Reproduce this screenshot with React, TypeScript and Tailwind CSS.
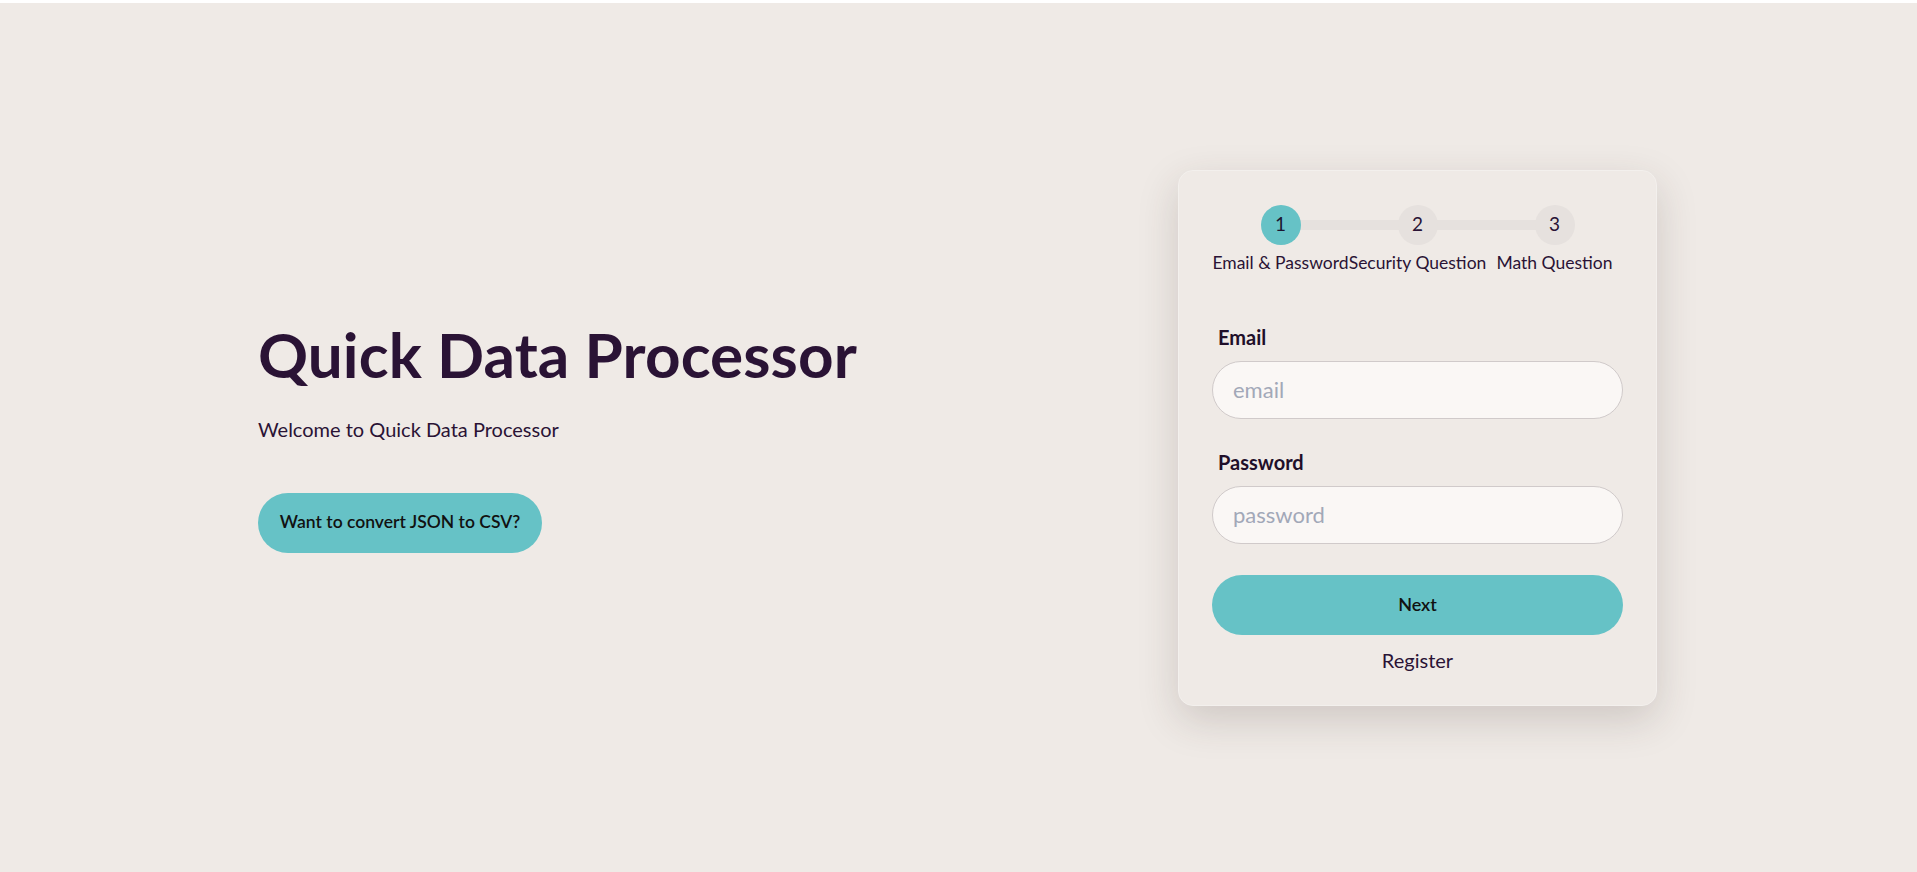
import React, { useState } from 'react';

const steps = ['Email & Password', 'Security Question', 'Math Question'];

export default function App() {
  const [email, setEmail] = useState('');
  const [password, setPassword] = useState('');
  const current = 0;

  return (
    <div className="min-h-screen bg-white font-['Lato',sans-serif] text-[#2a1335]">
      <div className="h-[3px] bg-white" />
      <main className="flex h-[869px] items-center justify-between bg-[#efeae6] pl-[258px] pr-[260px]">
        {/* Hero */}
        <section className="flex flex-col items-start">
          <h1 className="text-[62px] font-bold leading-[62px] tracking-[0.1px] text-[#2a1335]">
            Quick Data Processor
          </h1>
          <p className="mt-[30px] text-[20px] leading-[28px]">Welcome to Quick Data Processor</p>
          <button className="mt-[50px] flex h-[60px] w-[284px] items-center justify-center rounded-full bg-[#66c2c6] text-[17.5px] font-semibold text-[#111111]">
            Want to convert JSON to CSV?
          </button>
        </section>

        {/* Login card */}
        <div className="flex w-[479px] flex-col rounded-[15px] border border-[#f3f0ed] bg-[#efeae6] px-[33px] pb-[31px] pt-[34px] shadow-[0_14px_40px_rgba(60,45,40,0.18)]">
          {/* Stepper */}
          <div className="relative grid grid-cols-3">
            <div className="absolute left-[68px] right-[68px] top-[15px] h-[10px] bg-[#e6e1de]" />
            {steps.map((s, i) => (
              <div key={s} className="relative flex flex-col items-center">
                <div
                  className={`flex h-[40px] w-[40px] items-center justify-center rounded-full text-[19px] ${
                    i === current ? 'bg-[#66c2c6] text-[#1c1530]' : 'bg-[#e6e1de] text-[#2a1335]'
                  }`}
                >
                  {i + 1}
                </div>
                <span className="mt-[6px] whitespace-nowrap text-[17.5px] leading-[24px]">{s}</span>
              </div>
            ))}
          </div>

          {/* Form */}
          <form className="mt-[48px] flex flex-col" onSubmit={(e) => e.preventDefault()}>
            <label className="pl-[6px] text-[20px] font-bold leading-[28px] text-[#1f0f2a]">Email</label>
            <input
              value={email}
              onChange={(e) => setEmail(e.target.value)}
              placeholder="email"
              className="mt-[10px] h-[58px] rounded-full border border-[#d0caca] bg-[#faf7f5] pl-[20px] text-[22px] outline-none placeholder:text-[#a2a8b8]"
            />
            <label className="mt-[29px] pl-[6px] text-[20px] font-bold leading-[28px] text-[#1f0f2a]">Password</label>
            <input
              type="password"
              value={password}
              onChange={(e) => setPassword(e.target.value)}
              placeholder="password"
              className="mt-[10px] h-[58px] rounded-full border border-[#d0caca] bg-[#faf7f5] pl-[20px] text-[22px] outline-none placeholder:text-[#a2a8b8]"
            />
            <button className="mt-[31px] h-[60px] rounded-full bg-[#66c2c6] text-[18px] font-semibold text-[#111111]">
              Next
            </button>
            <a className="mt-[11px] cursor-pointer text-center text-[20px] leading-[28px] text-[#2a1335]">Register</a>
          </form>
        </div>
      </main>
    </div>
  );
}
